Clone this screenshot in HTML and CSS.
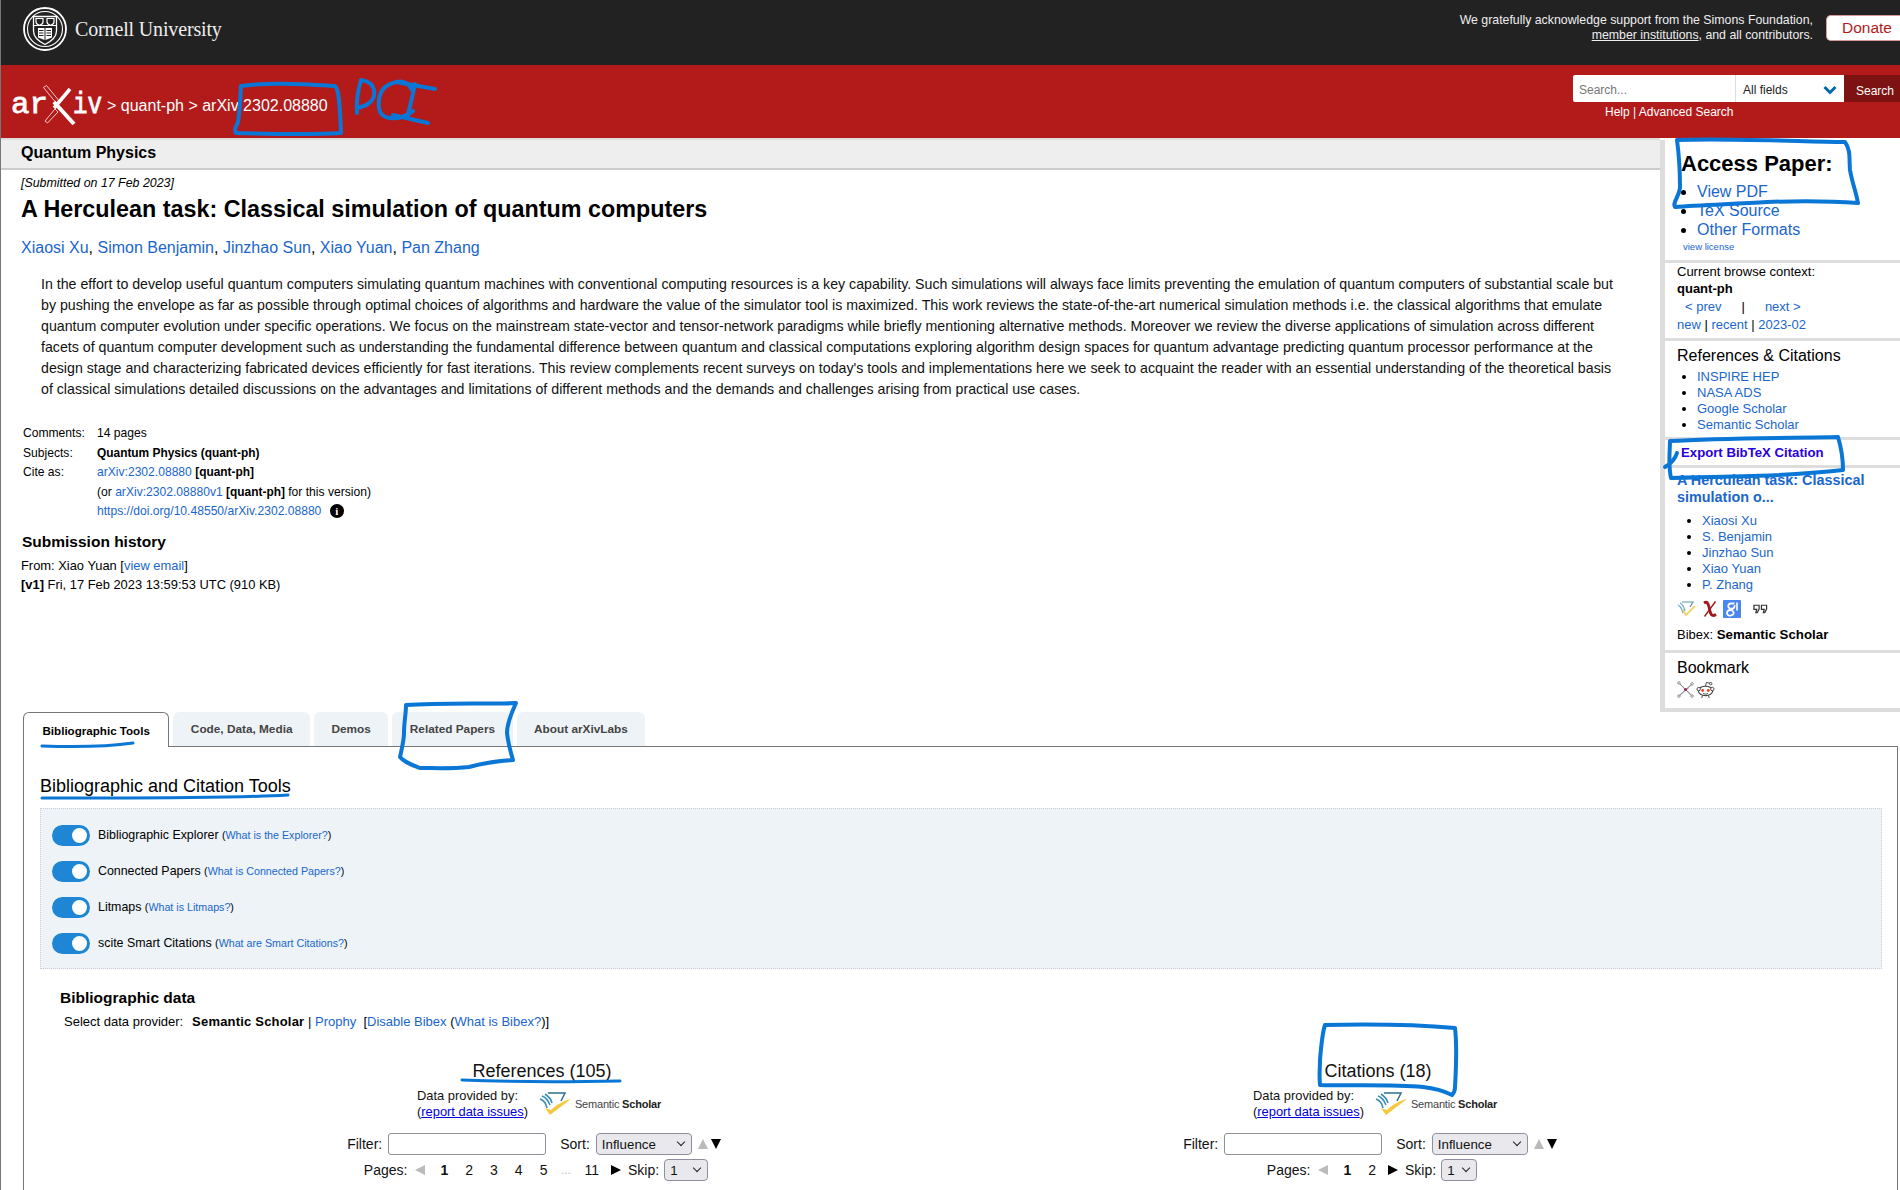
FILE: index.html
```html
<!DOCTYPE html>
<html lang="en">
<head>
<meta charset="utf-8">
<title>A Herculean task: Classical simulation of quantum computers</title>
<link rel="stylesheet" href="styles.css">
</head>
<body>
<div class="page">
  <header class="top-bar">
    <div class="cornell">
      <svg class="seal" viewBox="0 0 44 44" width="44" height="44">
        <circle cx="22" cy="22" r="21" fill="none" stroke="#fff" stroke-width="1.800"/>
        <circle cx="22" cy="22" r="17.500" fill="none" stroke="#fff" stroke-width="1.100"/>
        <path d="M10.500 9.500h23V24c0 6.500-5.500 10.500-11.500 13.500C16 34.500 10.500 30.500 10.500 24z" fill="none" stroke="#fff" stroke-width="1.300"/>
        <path d="M10.500 18.500h23" stroke="#fff" stroke-width="1"/>
        <path d="M13 11.500h7v3.500c0 1.800-1.500 2.700-3.500 3.300-2-.6-3.500-1.500-3.500-3.300zM24 11.500h7v3.500c0 1.800-1.500 2.700-3.500 3.300-2-.6-3.500-1.500-3.500-3.300z" fill="none" stroke="#fff" stroke-width="1.200"/>
        <path d="M15 21h6.500v12l-6.500-2.500zM29 21h-6.500v12l6.500-2.500z" fill="#fff"/>
        <path d="M16 23.500h4.500M16 26h4.500M16 28.500h4.500M23.500 23.500H28M23.500 26H28M23.500 28.500H28" stroke="#222" stroke-width="1"/>
      </svg>
      <span class="cornell-name">Cornell University</span>
    </div>
    <div class="support">
      <p class="support-text">We gratefully acknowledge support from the Simons Foundation,<br><span class="under">member institutions</span>, and all contributors.</p>
      <span class="donate">Donate</span>
    </div>
  </header>

  <div class="red-bar">
    <div class="crumbs">
      <svg class="arxiv-logo" viewBox="0 0 100 42" width="100" height="42">
        <text x="1" y="29" class="logo-text" textLength="37" lengthAdjust="spacingAndGlyphs">ar</text>
        <text x="63" y="29" class="logo-text" textLength="29" lengthAdjust="spacingAndGlyphs">iv</text>
        <path d="M33.500 3.500l3-2L50 18l-3 2z" fill="none" stroke="#f0c8c8" stroke-width="1"/>
        <path d="M44 18l20 22" stroke="#fff" stroke-width="4"/>
        <path d="M60 5L44 24" stroke="#fff" stroke-width="3.500"/>
        <path d="M45 25L35 37l2.500 2L48 28z" fill="none" stroke="#f0c8c8" stroke-width="1"/>
      </svg>
      <span class="crumb-text">&gt; quant-ph &gt; arXiv 2302.08880</span>
    </div>
    <div class="search">
      <div class="search-row">
        <span class="search-input">Search...</span>
        <span class="search-field">All fields
          <svg class="chev" viewBox="0 0 14 10" width="14" height="10"><path d="M1.500 2l5.500 5.500L12.500 2" fill="none" stroke="#0068ac" stroke-width="3"/></svg>
        </span>
        <span class="search-btn">Search</span>
      </div>
      <div class="search-help">Help | Advanced Search</div>
    </div>
  </div>

  <div class="upper">
    <main class="paper">
      <div class="subject-bar">Quantum Physics</div>
      <div class="paper-body">
        <div class="submitted">[Submitted on 17 Feb 2023]</div>
        <h1 class="title">A Herculean task: Classical simulation of quantum computers</h1>
        <div class="authors"><a>Xiaosi Xu</a>, <a>Simon Benjamin</a>, <a>Jinzhao Sun</a>, <a>Xiao Yuan</a>, <a>Pan Zhang</a></div>
        <p class="abstract">In the effort to develop useful quantum computers simulating quantum machines with conventional computing resources is a key capability. Such simulations will always face limits preventing the emulation of quantum computers of substantial scale but by pushing the envelope as far as possible through optimal choices of algorithms and hardware the value of the simulator tool is maximized. This work reviews the state-of-the-art numerical simulation methods i.e. the classical algorithms that emulate quantum computer evolution under specific operations. We focus on the mainstream state-vector and tensor-network paradigms while briefly mentioning alternative methods. Moreover we review the diverse applications of simulation across different facets of quantum computer development such as understanding the fundamental difference between quantum and classical computations exploring algorithm design spaces for quantum advantage predicting quantum processor performance at the design stage and characterizing fabricated devices efficiently for fast iterations. This review complements recent surveys on today's tools and implementations here we seek to acquaint the reader with an essential understanding of the theoretical basis of classical simulations detailed discussions on the advantages and limitations of different methods and the demands and challenges arising from practical use cases.</p>
        <div class="meta">
          <div class="meta-label">Comments:</div><div>14 pages</div>
          <div class="meta-label">Subjects:</div><div><b>Quantum Physics (quant-ph)</b></div>
          <div class="meta-label">Cite as:</div><div><a>arXiv:2302.08880</a> <b>[quant-ph]</b></div>
          <div></div><div>(or <a>arXiv:2302.08880v1</a> <b>[quant-ph]</b> for this version)</div>
          <div></div><div><a>https://doi.org/10.48550/arXiv.2302.08880</a> <span class="info">i</span></div>
        </div>
        <h2 class="history-title">Submission history</h2>
        <div class="history">From: Xiao Yuan [<a>view email</a>]<br><b>[v1]</b> Fri, 17 Feb 2023 13:59:53 UTC (910 KB)</div>
      </div>
    </main>

    <aside class="side">
      <section class="side-box access">
        <h2 class="access-title">Access Paper:</h2>
        <ul class="access-list">
          <li><a>View PDF</a></li>
          <li><a>TeX Source</a></li>
          <li><a>Other Formats</a></li>
        </ul>
        <a class="license">view license</a>
      </section>
      <section class="side-box browse">
        <div>Current browse context:</div>
        <div class="browse-name">quant-ph</div>
        <div class="browse-nav"><a>&lt; prev</a><span class="sep">|</span><a>next &gt;</a></div>
        <div class="browse-links"><a>new</a> | <a>recent</a> | <a>2023-02</a></div>
      </section>
      <section class="side-box refs">
        <h3 class="side-title">References &amp; Citations</h3>
        <ul class="side-list">
          <li><a>INSPIRE HEP</a></li>
          <li><a>NASA ADS</a></li>
          <li><a>Google Scholar</a></li>
          <li><a>Semantic Scholar</a></li>
        </ul>
      </section>
      <section class="side-box export"><a class="export-link">Export BibTeX Citation</a></section>
      <section class="side-box bibex">
        <a class="bibex-title">A Herculean task: Classical simulation o...</a>
        <ul class="side-list authors-list">
          <li><a>Xiaosi Xu</a></li>
          <li><a>S. Benjamin</a></li>
          <li><a>Jinzhao Sun</a></li>
          <li><a>Xiao Yuan</a></li>
          <li><a>P. Zhang</a></li>
        </ul>
        <div class="bibex-icons">
          <svg viewBox="0 0 20 16" width="20" height="16"><path d="M1 4c2 1 4 4 5 8M3 2c2 1 4 4 5 8" fill="none" stroke="#6fa8c4" stroke-width="1.300"/><path d="M5 1h11l-3 5" fill="none" stroke="#5c93ac" stroke-width="1.200"/><path d="M6 9l3 5 9-9" fill="none" stroke="#f3d26a" stroke-width="1.800"/></svg>
          <svg viewBox="0 0 14 18" width="14" height="18"><path d="M1 3c3-2 4 0 5 4l1.500 6c1 3 3 3 5.500 1.500" fill="none" stroke="#a01818" stroke-width="2.800"/><path d="M12.500 1.500L1.500 16.500" fill="none" stroke="#a01818" stroke-width="1.400"/></svg>
          <svg viewBox="0 0 18 18" width="18" height="18"><rect width="18" height="18" rx="1" fill="#4b86f0"/><path d="M11.500 3.500H8C5.800 3.500 5 5 5.300 6.800c.4 1.800 2.800 2.400 4.300 1.400M8 10c-2 0-4 1-4 3s2 3 4 2.500 3.300-2 2.400-3.500L9 10.200c-.5-1 2.800-1.800 2.800-5" fill="none" stroke="#fff" stroke-width="1.800"/><path d="M14 2.500v8" stroke="#fff" stroke-width="1.600"/></svg>
          <svg class="quote-icon" viewBox="0 0 16 10" width="15" height="10"><path d="M1 1h5.500v4L4.500 9H3l1-3.500H1zM9 1h5.500v4l-2 4H11l1-3.500H9z" fill="none" stroke="#333" stroke-width="1.300"/></svg>
        </div>
        <div class="bibex-line">Bibex: <b>Semantic Scholar</b></div>
      </section>
      <section class="side-box bookmark">
        <h3 class="side-title">Bookmark</h3>
        <div class="bookmark-icons">
          <svg viewBox="0 0 18 18" width="17" height="17"><path d="M2 2l7 7M16 3L2 16M9 9l7 7M9 9l3-1" stroke="#888" stroke-width="1.100"/><circle cx="2" cy="2" r="1.300" fill="#fff" stroke="#888"/><circle cx="16" cy="16" r="1.300" fill="#fff" stroke="#888"/><circle cx="2" cy="16" r="1.300" fill="#fff" stroke="#888"/><circle cx="16" cy="3" r="1.300" fill="#fff" stroke="#888"/><circle cx="9" cy="9" r="1.600" fill="#a0206a"/></svg>
          <svg viewBox="0 0 20 19" width="19" height="18"><ellipse cx="10" cy="10.500" rx="7.500" ry="5" fill="#fff" stroke="#444" stroke-width="1.200"/><circle cx="2.800" cy="8.500" r="1.800" fill="#fff" stroke="#444"/><circle cx="17.200" cy="8.500" r="1.800" fill="#fff" stroke="#444"/><circle cx="7" cy="10" r="1.500" fill="#f0401a"/><circle cx="13" cy="10" r="1.500" fill="#f0401a"/><path d="M10 5.500l1-4 4 1M7 15l-1 3M13 15l1 3M7.500 13c1.500 1 3.500 1 5 0" fill="none" stroke="#444"/><circle cx="15.500" cy="2.800" r="1.300" fill="#fff" stroke="#444"/></svg>
        </div>
      </section>
    </aside>
  </div>

  <nav class="tabs">
    <span class="tab tab-active">Bibliographic Tools</span>
    <span class="tab">Code, Data, Media</span>
    <span class="tab">Demos</span>
    <span class="tab">Related Papers</span>
    <span class="tab">About arXivLabs</span>
  </nav>

  <section class="panel">
    <h2 class="panel-title">Bibliographic and Citation Tools</h2>
    <div class="toggles">
      <div class="toggle-row"><span class="toggle"></span><span>Bibliographic Explorer <span class="small">(<a>What is the Explorer?</a>)</span></span></div>
      <div class="toggle-row"><span class="toggle"></span><span>Connected Papers <span class="small">(<a>What is Connected Papers?</a>)</span></span></div>
      <div class="toggle-row"><span class="toggle"></span><span>Litmaps <span class="small">(<a>What is Litmaps?</a>)</span></span></div>
      <div class="toggle-row"><span class="toggle"></span><span>scite Smart Citations <span class="small">(<a>What are Smart Citations?</a>)</span></span></div>
    </div>
    <h3 class="bib-title">Bibliographic data</h3>
    <div class="provider">Select data provider:&nbsp;&nbsp; <b>Semantic Scholar</b> | <a>Prophy</a> &nbsp;[<a>Disable Bibex</a> (<a>What is Bibex?</a>)]</div>

    <div class="bib-cols">
      <div class="bib-col">
        <h3 class="col-title">References (105)</h3>
        <div class="provided">
          <div class="provided-text">Data provided by:<br>(<a class="plain-link">report data issues</a>)</div>
          <svg class="ss-mark" viewBox="0 0 34 24" width="34" height="24"><path d="M1 7c3 1 6 4 7 9M3 4c3 1 6 4 8 9M6 2c3 2 6 5 7 9" fill="none" stroke="#3b8db4" stroke-width="1.600"/><path d="M9 1h17l-4 8" fill="none" stroke="#2f6f8f" stroke-width="1.500"/><path d="M6 16l5 7L32 7C24 9 17 13 12 18z" fill="#f4c93f"/></svg>
          <span class="ss-name">Semantic <b>Scholar</b></span>
        </div>
        <div class="filter-row">
          <label>Filter:</label><input class="filter-input" type="text">
          <label class="sort-label">Sort:</label>
          <span class="select-wrap"><select class="select-sort"><option>Influence</option></select></span>
          <span class="arrows"><span class="tri-up"></span><span class="tri-down"></span></span>
        </div>
        <div class="pages-row">
          <span class="pages-label">Pages:</span><span class="tri-left"></span>
          <b>1</b><span>2</span><span>3</span><span>4</span><span>5</span><span class="dots">...</span><span>11</span>
          <span class="tri-right"></span>
          <span class="skip-label">Skip:</span><span class="select-wrap skip-wrap"><select class="select-skip"><option>1</option></select></span>
        </div>
      </div>
      <div class="bib-col">
        <h3 class="col-title">Citations (18)</h3>
        <div class="provided">
          <div class="provided-text">Data provided by:<br>(<a class="plain-link">report data issues</a>)</div>
          <svg class="ss-mark" viewBox="0 0 34 24" width="34" height="24"><path d="M1 7c3 1 6 4 7 9M3 4c3 1 6 4 8 9M6 2c3 2 6 5 7 9" fill="none" stroke="#3b8db4" stroke-width="1.600"/><path d="M9 1h17l-4 8" fill="none" stroke="#2f6f8f" stroke-width="1.500"/><path d="M6 16l5 7L32 7C24 9 17 13 12 18z" fill="#f4c93f"/></svg>
          <span class="ss-name">Semantic <b>Scholar</b></span>
        </div>
        <div class="filter-row">
          <label>Filter:</label><input class="filter-input" type="text">
          <label class="sort-label">Sort:</label>
          <span class="select-wrap"><select class="select-sort"><option>Influence</option></select></span>
          <span class="arrows"><span class="tri-up"></span><span class="tri-down"></span></span>
        </div>
        <div class="pages-row">
          <span class="pages-label">Pages:</span><span class="tri-left"></span>
          <b>1</b><span>2</span>
          <span class="tri-right"></span>
          <span class="skip-label">Skip:</span><span class="select-wrap skip-wrap"><select class="select-skip select-skip-small"><option>1</option></select></span>
        </div>
      </div>
    </div>
  </section>

  <svg class="ink" viewBox="0 0 1900 1190" width="1900" height="1190" aria-hidden="true">
    <g fill="none" stroke="#0a76d6" stroke-width="4" stroke-linecap="round" stroke-linejoin="round">
      <path d="M241 86C270 82 300 84 335 86C340 90 340 115 341 133C310 135 270 134 236 133C233 128 237 126 238 122C240 110 240 98 241 86"/>
      <path d="M357 113C356 100 358 90 361 80C368 81 373 84 374 90C376 100 368 106 357 108"/>
      <path d="M397 82C386 84 380 90 379 100C378 110 380 117 390 118C400 119 406 116 413 111M397 82C403 80 410 84 412 90"/>
      <path d="M396 82L435 89M415 84C413 95 410 105 408 115M393 115L428 123"/>
      <path d="M1677 140C1720 138 1790 141 1845 142C1851 150 1849 160 1850 170C1852 182 1856 192 1858 203C1830 201 1795 201 1767 202C1735 204 1700 205 1675 207C1672 203 1680 195 1680 187C1680 170 1679 155 1677 140"/>
      <path d="M1670 441C1720 438 1790 438 1838 437C1841 447 1843 460 1843 470C1790 476 1730 477 1671 478C1668 465 1670 450 1670 441"/>
      <path d="M1677 453C1675 460 1670 464 1665 467"/>
      <path d="M406 705C440 703 480 704 516 703C512 712 507 722 507 733C508 742 510 750 513 760C495 761 480 764 469 767C450 769 435 768 420 768C410 764 404 762 400 757C402 748 404 740 404 733C404 722 406 714 406 705"/>
      <path d="M42 746C70 747 105 747 133 743" stroke-width="3"/>
      <path d="M42 798C110 798 220 799 288 795" stroke-width="3"/>
      <path d="M462 1080C510 1082 570 1082 620 1081" stroke-width="3"/>
      <path d="M1325 1025C1370 1024 1420 1025 1455 1028C1457 1045 1456 1070 1455 1087C1455 1091 1453 1094 1452 1095C1442 1090 1432 1088 1423 1087C1390 1084 1350 1086 1320 1085C1319 1075 1320 1068 1320 1060C1321 1048 1322 1034 1325 1025"/>
    </g>
  </svg>
</div>
</body>
</html>
```

FILE: styles.css
```css
* { box-sizing: border-box; }
html, body { margin: 0; padding: 0; background: #fff; }
body { font-family: "Liberation Sans", Arial, sans-serif; color: #000; overflow: hidden; }
a { color: #1a66cc; }
h1, h2, h3, p, ul { margin: 0; padding: 0; }

.page { position: relative; width: 1900px; height: 1190px; overflow: hidden; border-left: 1px solid #777; }

/* top */
.top-bar { height: 65px; background: #222; display: flex; justify-content: space-between; color: #fff; }
.cornell { display: flex; align-items: center; gap: 8px; padding: 0 0 7px 22px; }
.seal { display: block; }
.cornell-name { font-family: "Liberation Serif", serif; font-size: 20px; letter-spacing: -0.15px; color: #eee; }
.support { display: flex; align-items: flex-start; gap: 13px; padding-top: 13px; }
.support-text { font-size: 12.33px; line-height: 15px; text-align: right; color: #eee; }
.under { text-decoration: underline; }
.donate { width: 74px; height: 26px; margin-top: 2px; background: #fff; color: #b31b1b; font-size: 15.5px; line-height: 24px; padding-left: 15px; border-radius: 5px 0 0 5px; border: 1px solid #d79a9a; border-right: 0; }

.red-bar { height: 73px; background: #b31b1b; display: flex; justify-content: space-between; color: #fff; }
.crumbs { display: flex; align-items: flex-start; padding: 19px 0 0 9px; }
.arxiv-logo { display: block; }
.logo-text { font-family: "Liberation Mono", monospace; font-size: 30px; fill: #fff; stroke: #fff; stroke-width: 0.8px; }
.crumb-text { font-size: 16px; line-height: 18px; margin: 13px 0 0 -3px; }
.search { width: 327px; padding-top: 10px; }
.search-row { display: flex; height: 27px; font-size: 12px; line-height: 31px; }
.search-input { width: 162px; background: #fff; color: #777; padding-left: 6px; border-radius: 2px 0 0 2px; }
.search-field { width: 109px; background: #fff; color: #222; padding-left: 7px; border-left: 1px solid #ddd; position: relative; }
.chev { position: absolute; right: 7px; top: 10px; }
.search-btn { width: 56px; background: #7c1212; color: #fff; padding: 1px 0 0 12px; }
.search-help { font-size: 12px; line-height: 16px; margin-top: 2px; padding-left: 32px; color: #fff; }

/* upper split */
.upper { display: flex; height: 574px; }
.paper { width: 1659px; flex: none; }
.subject-bar { height: 32px; padding: 0 0 0 20px; background: #eee; border-top: 2px solid #ddd; border-bottom: 2px solid #ccc; font-size: 16px; font-weight: bold; line-height: 26px; }
.paper-body { padding: 0 0 0 20px; }
.submitted { font-size: 12.4px; font-style: italic; line-height: 14px; margin-top: 6px; }
.title { font-size: 23.33px; font-weight: bold; line-height: 28px; margin-top: 5px; }
.authors { font-size: 16px; line-height: 20px; margin-top: 15px; }
.abstract { font-size: 14.2px; line-height: 21px; margin: 16px 0 0 20px; width: 1578px; color: #111; }
.meta { display: grid; grid-template-columns: 74px 1fr; font-size: 12.1px; line-height: 19.5px; margin: 24px 0 0 2px; }
.meta b { font-size: 11.9px; }
.info { display: inline-block; width: 14px; height: 14px; border-radius: 50%; background: #000; color: #fff; font: bold 11px/14px "Liberation Serif", serif; text-align: center; margin-left: 5px; }
.history-title { font-size: 15.5px; font-weight: bold; line-height: 20px; margin: 10px 0 0 1px; }
.history { font-size: 12.9px; line-height: 19px; margin-top: 4px; }

/* sidebar */
.side { width: 240px; flex: none; margin-top: 2px; border-left: 5px solid #ddd; border-bottom: 4px solid #ddd; font-size: 12px; background: #fff; }
.side-box { border-bottom: 3px solid #ddd; padding-left: 16px; }
.access { height: 123px; }
.access-title { font-size: 22px; font-weight: bold; line-height: 26px; padding-top: 11px; height: 37px; }
.access-list { font-size: 16px; line-height: 19px; list-style: disc; padding: 5px 0 0 15px; margin-left: 1px; }
.license { display: block; font-size: 9.5px; line-height: 12px; margin: 2px 0 0 2px; }
.browse { height: 78px; padding-left: 12px; font-size: 13px; line-height: 17px; }
.browse-name { font-weight: bold; }
.browse-nav { margin-top: 1px; padding-left: 8px; }
.browse-links { margin-top: 1px; }
.sep { margin: 0 20px; }
.refs { height: 99px; padding-left: 12px; }
.side-title { font-size: 16px; font-weight: normal; line-height: 20px; padding-top: 5px; height: 28px; }
.side-list { font-size: 13px; line-height: 16px; list-style: disc; padding-left: 20px; }
.export { height: 28px; line-height: 25px; }
.export-link { font-size: 13.2px; font-weight: bold; color: #2a00e0; }
.bibex { height: 185px; padding-left: 12px; }
.bibex-title { display: block; font-size: 14.4px; font-weight: bold; line-height: 17px; padding-top: 4px; height: 38px; width: 205px; }
.authors-list { padding-left: 25px; margin-top: 7px; }
.bibex-icons { display: flex; align-items: center; gap: 6px; height: 22px; margin-top: 5px; }
.quote-icon { margin-left: 6px; }
.bibex-line { font-size: 13px; line-height: 16px; margin-top: 7px; }
.bibex-line b { font-size: 13.3px; }
.bookmark { height: 50px; padding-left: 12px; border-bottom: 0; }
.bookmark-icons { display: flex; gap: 2px; }

/* tabs */
.tabs { display: flex; gap: 4px; height: 34px; padding-left: 22px; }
.tab { padding: 0 17.5px; line-height: 34px; background: #eef3f7; border-radius: 6px 6px 0 0; font-size: 11.8px; font-weight: bold; color: #444; }
.tab-active { background: #fff; color: #000; border: 1px solid #777; border-bottom: 0; position: relative; z-index: 1; height: 35px; line-height: 36px; padding: 0 18.5px; font-size: 11.6px; }

.panel { position: relative; margin: 0 2px 0 22px; border: 1px solid #777; height: 500px; padding: 0 0 0 16px; }
.panel-title { font-size: 18px; font-weight: normal; line-height: 22px; margin-top: 28px; }
.toggles { width: 1842px; height: 161px; margin-top: 11px; background: #edf3f7; border: 1px dotted #ccd; padding: 8px 0 0 11px; font-size: 12.4px; }
.toggle-row { display: flex; align-items: center; gap: 8px; height: 36px; }
.toggle { position: relative; width: 38px; height: 21px; border-radius: 11px; background: #1f86d6; }
.toggle::after { content: ""; position: absolute; right: 3px; top: 3px; width: 15px; height: 15px; border-radius: 50%; background: #fff; }
.small { font-size: 10.7px; }
.bib-title { font-size: 15.5px; font-weight: bold; line-height: 20px; margin: 19px 0 0 20px; }
.provider { font-size: 13px; line-height: 18px; margin: 5px 0 0 24px; }
.provider b { margin-left: -2px; letter-spacing: 0.2px; }

.bib-cols { display: grid; grid-template-columns: 836px 836px; margin: 29px 0 0 84px; }
.bib-col { display: flex; flex-direction: column; align-items: center; color: #111; }
.col-title { font-size: 18px; font-weight: normal; line-height: 22px; }
.provided { display: flex; align-items: center; margin: 6px 0 0 -6px; font-size: 12.9px; line-height: 16px; }
.provided-text { width: 122px; }
.plain-link { color: #00d; text-decoration: underline; }
.ss-name { font-size: 11px; margin-left: 2px; color: #444; letter-spacing: -0.2px; }
.ss-name b { color: #222; }
.filter-row { display: flex; align-items: center; gap: 6px; height: 22px; margin: 13px 0 0 -16px; font-size: 14px; }
.filter-input { width: 158px; height: 22px; border: 1px solid #8f8f9d; border-radius: 3px; background: #fff; padding: 0; }
.sort-label { margin-left: 8px; }
.select-wrap { position: relative; display: block; height: 22px; }
.select-wrap::after { content: ""; position: absolute; right: 8px; top: 6px; width: 5px; height: 5px; border-right: 1.500px solid #222; border-bottom: 1.500px solid #222; transform: rotate(45deg); pointer-events: none; }
.skip-wrap { margin-left: -12px; }
select { appearance: none; display: block; height: 22px; margin: 0; padding: 0 0 0 5px; border: 1px solid #8f8f9d; border-radius: 4px; background: #e9e9ed; color: #111; font: 13.33px "Liberation Sans", Arial, sans-serif; }
.select-sort { width: 96px; }
.select-skip { width: 44px; }
.select-skip-small { width: 36px; }
.arrows { display: flex; gap: 3px; }
.tri-up, .tri-down { width: 0; height: 0; border-left: 5.500px solid transparent; border-right: 5.500px solid transparent; }
.tri-up { border-bottom: 10px solid #bbb; }
.tri-down { border-top: 10px solid #000; }
.pages-row { display: flex; align-items: center; gap: 17px; height: 22px; margin: 4px 0 0 -12px; font-size: 14px; }
.pages-row .skip-label { margin-left: -10px; }
.pages-label { margin-right: -9px; }
.pages-row .tri-left { margin-right: -2px; }
.pages-row .tri-right { margin-left: -5px; }
.dots { color: #bbb; font-size: 12px; margin: 0 -3.500px; }
.tri-left, .tri-right { width: 0; height: 0; border-top: 5.500px solid transparent; border-bottom: 5.500px solid transparent; }
.tri-left { border-right: 10px solid #bbb; }
.tri-right { border-left: 10px solid #000; }

.ink { position: absolute; left: -1px; top: 0; z-index: 5; pointer-events: none; }
```
